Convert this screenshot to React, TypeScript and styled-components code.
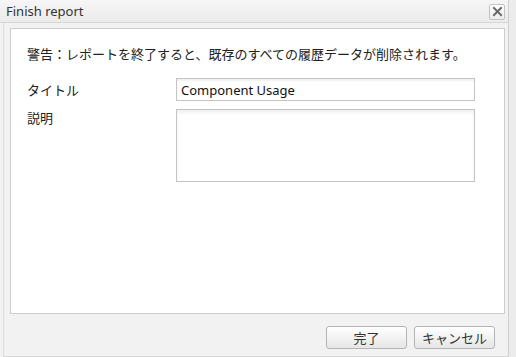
import React from "react"
import styled, { createGlobalStyle } from "styled-components"

const GlobalStyle = createGlobalStyle`
  html, body {
    margin: 0;
    padding: 0;
    background: #ececec;
  }
  body {
    font-family: "Noto Sans", "Noto Sans CJK JP", sans-serif;
    font-size: 13px;
    color: #222;
  }
`

export default function App() {
  return (
    <>
      <GlobalStyle />
      <S.Dialog>
        <S.TitleBar>
          <S.Title>Finish report</S.Title>
          <S.CloseButton aria-label="close">
            <svg width="11" height="11" viewBox="0 0 11 11">
              <path d="M2 2 L9 9 M9 2 L2 9" stroke="#6a6a6a" strokeWidth="2" strokeLinecap="square" />
            </svg>
          </S.CloseButton>
        </S.TitleBar>
        <S.Body>
          <S.Panel>
            <S.Warning>警告：レポートを終了すると、既存のすべての履歴データが削除されます。</S.Warning>
            <S.Form>
              <S.Label>タイトル</S.Label>
              <S.Input defaultValue="Component Usage" />
              <S.Label $top>説明</S.Label>
              <S.TextArea />
            </S.Form>
          </S.Panel>
          <S.Footer>
            <S.Button>完了</S.Button>
            <S.Button>キャンセル</S.Button>
          </S.Footer>
        </S.Body>
      </S.Dialog>
    </>
  )
}

const S = {
  Dialog: styled.div`
    display: flex;
    flex-direction: column;
    width: 509px;
    height: 357px;
    box-sizing: border-box;
    background: #f2f2f2;
    border-right: 1px solid #cfcfcf;
  `,
  TitleBar: styled.div`
    display: flex;
    align-items: center;
    justify-content: space-between;
    height: 23px;
    box-sizing: border-box;
    padding: 0 3px 0 6px;
    background: linear-gradient(#f6f6f6, #ebebeb);
    border-bottom: 1px solid #d6d6d6;
  `,
  Title: styled.span`
    font-family: "Noto Sans", sans-serif;
    font-size: 13px;
    color: #333;
    line-height: 16px;
  `,
  CloseButton: styled.button`
    display: flex;
    align-items: center;
    justify-content: center;
    width: 16px;
    height: 16px;
    padding: 0;
    margin-top: 1px;
    border: 1px solid #c2c2c2;
    border-radius: 2px;
    background: linear-gradient(#ffffff, #ececec);
  `,
  Body: styled.div`
    flex: 1;
    display: flex;
    flex-direction: column;
    margin-left: 3px;
    padding: 5px 3px 0 6px;
    border-left: 1px solid #dcdcdc;
    border-bottom: 1px solid #d6d6d6;
  `,
  Panel: styled.div`
    height: 286px;
    box-sizing: border-box;
    background: #fff;
    border: 1px solid #cdcdcd;
    padding: 16px 29px 0 16px;
  `,
  Warning: styled.p`
    margin: 0;
    font-family: "Noto Sans CJK JP", sans-serif;
    font-size: 13px;
    line-height: 18px;
    color: #222;
  `,
  Form: styled.div`
    display: grid;
    grid-template-columns: 149px 1fr;
    row-gap: 8px;
    margin-top: 15px;
    align-items: center;
  `,
  Label: styled.label<{ $top?: boolean }>`
    font-family: "Noto Sans CJK JP", sans-serif;
    font-size: 13px;
    color: #222;
    align-self: ${(p) => (p.$top ? "start" : "center")};
    margin-top: ${(p) => (p.$top ? "-1px" : "0")};
  `,
  Input: styled.input`
    height: 23px;
    box-sizing: border-box;
    padding: 0 4px;
    border: 1px solid #c4c4c4;
    box-shadow: inset 0 2px 2px rgba(0, 0, 0, 0.06);
    font-family: "Noto Sans", sans-serif;
    font-size: 13px;
    color: #111;
    outline: none;
  `,
  TextArea: styled.textarea`
    height: 73px;
    box-sizing: border-box;
    border: 1px solid #c4c4c4;
    box-shadow: inset 0 3px 3px rgba(0, 0, 0, 0.06);
    resize: none;
    outline: none;
    display: block;
  `,
  Footer: styled.div`
    flex: 1;
    display: flex;
    justify-content: flex-end;
    align-items: flex-start;
    gap: 7px;
    padding: 12px 10px 0 0;
  `,
  Button: styled.button`
    width: 81px;
    height: 23px;
    padding: 0;
    border: 1px solid #b4b4b4;
    border-radius: 3px;
    background: linear-gradient(#ffffff, #e6e6e6);
    font-family: "Noto Sans CJK JP", sans-serif;
    font-size: 13px;
    color: #333;
  `,
}
